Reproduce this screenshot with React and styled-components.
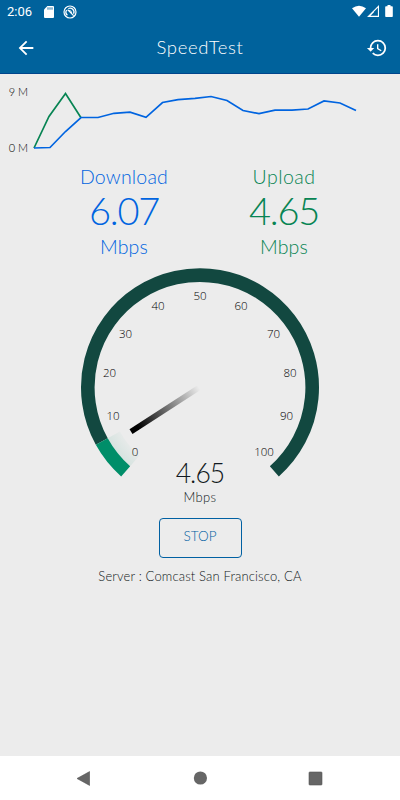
import styled, { createGlobalStyle } from 'styled-components';

const GlobalStyle = createGlobalStyle`
  body {
    margin: 0;
    background-color: #ececec;
    font-family: Lato, 'Liberation Sans', sans-serif;
    font-weight: 300;
  }
`;

const Screen = styled.div`
  width: 400px;
  height: 800px;
  display: flex;
  flex-direction: column;
  background-color: #ececec;
  overflow: hidden;
`;

const Top = styled.header`
  height: 74px;
  box-sizing: border-box;
  background-color: #00629c;
  border-bottom: 1px solid #00458c;
  color: #fff;
`;

const StatusBar = styled.div`
  height: 23px;
  display: flex;
  align-items: center;
  justify-content: space-between;
  padding: 0 6px 0 7px;
`;

const StatusGroup = styled.div`
  display: flex;
  align-items: center;
  gap: 9px;
  height: 23px;
`;

const Clock = styled.span`
  width: 28px;
  font: 400 13px/23px Roboto, sans-serif;
`;

const Toolbar = styled.div`
  height: 50px;
  display: grid;
  grid-template-columns: 52px 1fr 46px;
  align-items: center;
  justify-items: center;
`;

const Title = styled.h1`
  margin: 0 0 2px;
  padding-right: 6px;
  font-size: 18.5px;
  font-weight: 300;
  line-height: 24px;
  letter-spacing: 0.6px;
`;

const IconButton = styled.button`
  display: flex;
  padding: 0;
  border: 0;
  background: none;
  color: inherit;
`;

const Main = styled.main`
  flex: 1;
  display: flex;
  flex-direction: column;
  align-items: center;
`;

const ChartRow = styled.section`
  width: 400px;
  height: 88px;
  display: flex;
`;

const Axis = styled.div`
  width: 28px;
  height: 70px;
  padding-top: 11px;
  display: flex;
  flex-direction: column;
  justify-content: space-between;
  align-items: flex-end;
  font-size: 11px;
  line-height: 14px;
  color: #000;
`;

const Results = styled.section`
  width: 320px;
  height: 105px;
  display: grid;
  grid-template-columns: 1fr 1fr;
  padding-top: 2px;
  box-sizing: border-box;
`;

const Result = styled.div`
  display: flex;
  flex-direction: column;
  align-items: center;
  padding-left: 8px;
  color: ${(p) => p.$color};
`;

const Label = styled.span`
  font-size: 19.5px;
  line-height: 26px;
  letter-spacing: ${(p) => p.$spacing || 0}px;
`;

const Value = styled.strong`
  font-size: 38px;
  font-weight: 300;
  line-height: 40px;
  letter-spacing: -1.2px;
  margin-bottom: 2px;
`;

const Unit = styled.span`
  font-size: 19.5px;
  line-height: 29px;
  letter-spacing: 0.2px;
`;

const GaugeBox = styled.section`
  width: 240px;
  display: flex;
  flex-direction: column;
  align-items: center;
`;

const GaugeSvg = styled.svg`
  display: block;
  height: 211px;
  margin-bottom: -22px;
`;

const Tick = styled.text`
  font: 300 11.5px 'Open Sans', sans-serif;
  fill: #000;
  text-anchor: middle;
`;

const Speed = styled.div`
  font-size: 26.5px;
  line-height: 34px;
  color: #111820;
  letter-spacing: -0.9px;
`;

const SpeedUnit = styled.div`
  margin-top: -1px;
  font-size: 13px;
  line-height: 16px;
  color: #111820;
  letter-spacing: 0.3px;
`;

const StopButton = styled.button`
  width: 83px;
  height: 40px;
  margin-top: 13px;
  padding: 0 0 4px;
  border: 1px solid #0060a2;
  border-radius: 4px;
  background: none;
  color: #0060a2;
  font: 300 13.5px Lato, sans-serif;
`;

const Server = styled.p`
  margin: 10px 0 0;
  font-size: 13px;
  line-height: 17px;
  letter-spacing: 0.15px;
  color: #111820;
`;

const NavBar = styled.nav`
  height: 44px;
  background-color: #fff;
  display: grid;
  grid-template-columns: 1fr 14px 1fr;
  align-items: center;
  justify-items: start;
  padding: 0 77px 0 76px;

  svg:last-child {
    justify-self: end;
  }
`;

const download = [
  [34, 148], [50, 147.5], [65.5, 131.5], [81, 117.5], [98, 117.5], [114, 113.3],
  [130, 112.2], [146, 117.3], [162.5, 102.5], [178, 99.6], [195, 98.4], [211, 96.5],
  [227, 100.5], [243, 110.5], [259, 113.7], [275, 110.2], [292, 110.2], [308, 109],
  [324, 101], [340, 103], [356, 110.6],
];
const upload = [[34, 148], [49, 116.5], [65.5, 93.5], [81, 117.8]];

const ticks = [
  [0, 55, 189], [10, 33, 152.5], [20, 29.5, 110], [30, 45.5, 70.8], [40, 78, 43],
  [50, 120, 33], [60, 161, 43], [70, 193.5, 70.8], [80, 210, 110], [90, 206.5, 152.5],
  [100, 184, 189],
];

const toPoints = (data) => data.map((p) => p.join(',')).join(' ');

// angles are measured in degrees from straight down, clockwise
const arc = (r, from, to) => {
  const at = (deg) => {
    const a = (deg * Math.PI) / 180;
    return `${120 - r * Math.sin(a)} ${120.3 + r * Math.cos(a)}`;
  };
  return `M${at(from)}A${r} ${r} 0 ${to - from > 180 ? 1 : 0} 1 ${at(to)}`;
};

const Chart = () => (
  <ChartRow>
    <Axis>
      <span>9 M</span>
      <span>0 M</span>
    </Axis>
    <svg width="372" height="88" viewBox="28 74 372 88" fill="none" strokeWidth="1.7">
      <polyline points={toPoints(upload)} stroke="#078453" />
      <polyline points={toPoints(download)} stroke="#0064e0" />
    </svg>
  </ChartRow>
);

const Gauge = () => (
  <GaugeBox>
    <GaugeSvg width="240" height="211" viewBox="0 0 240 211" fill="none">
      <defs>
        <linearGradient id="needle" gradientUnits="userSpaceOnUse" x1="51" y1="164.6" x2="119" y2="120.6">
          <stop offset="0.1" stopColor="#000" />
          <stop offset="1" stopColor="#000" stopOpacity="0" />
        </linearGradient>
        <radialGradient id="glow" gradientUnits="userSpaceOnUse" cx="120" cy="120.3" r="105">
          <stop offset="0.86" stopColor="#00906a" stopOpacity="0.02" />
          <stop offset="1" stopColor="#00906a" stopOpacity="0.09" />
        </radialGradient>
      </defs>
      <path d={arc(98.5, 41.5, 61.1)} stroke="url(#glow)" strokeWidth="14" />
      <path d={arc(112.2, 61.1, 318.5)} stroke="#124840" strokeWidth="13.6" />
      <path d={arc(112.2, 41.5, 61.1)} stroke="#008e69" strokeWidth="13.6" />
      {ticks.map(([value, x, y]) => (
        <Tick key={value} x={x} y={y + 0.2}>{value}</Tick>
      ))}
      <path d="M51 164.6L119 120.6" stroke="url(#needle)" strokeWidth="5.5" />
    </GaugeSvg>
    <Speed>4.65</Speed>
    <SpeedUnit>Mbps</SpeedUnit>
  </GaugeBox>
);

const App = () => (
  <Screen>
    <GlobalStyle />
    <Top>
      <StatusBar>
        <StatusGroup>
          <Clock>2:06</Clock>
          <svg width="10" height="12" viewBox="0 0 10 12">
            <path d="M3.4 0H9q1 0 1 1v10q0 1-1 1H1q-1 0-1-1V3.4z" fill="#fff" />
            <path d="M4 1.3v2.4M6 1.3v2.4M8 1.3v2.4" stroke="#00629c" strokeWidth="0.9" />
          </svg>
          <svg width="14" height="14" viewBox="0 0 14 14" fill="none" stroke="#fff">
            <circle cx="7" cy="7" r="6" strokeWidth="1.2" />
            <path d="M4.4 10.2A4 4 0 0 1 3.6 5M5.3 3.5A4 4 0 0 1 10.6 8.8M4.6 4.6l6 6" strokeWidth="1.3" />
            <path d="M5.8 5.6q2.6-.6 2.8 2.6" strokeWidth="1" />
          </svg>
        </StatusGroup>
        <StatusGroup>
          <svg width="42" height="13" viewBox="0 0 42 13" fill="#fff">
            <path d="M0 3.2Q7 -1.8 14 3.2L7 11.7z" />
            <path d="M27 0v12H15zM25.9 2.8l-4 4v4h-3.4l3.4-3.6v3.6h4z" fillRule="evenodd" />
            <path d="M35.5 0h3v1.2H40q.8 0 .8.8v9.2q0 .8-.8.8h-6q-.8 0-.8-.8V2q0-.8.8-.8h1.5z" />
          </svg>
        </StatusGroup>
      </StatusBar>
      <Toolbar>
        <IconButton aria-label="Back">
          <svg width="22" height="22" viewBox="0 0 24 24" fill="currentColor">
            <path d="M20 11H7.83l5.59-5.59L12 4l-8 8 8 8 1.41-1.41L7.83 13H20v-2z" />
          </svg>
        </IconButton>
        <Title>SpeedTest</Title>
        <IconButton aria-label="History">
          <svg width="22" height="22" viewBox="0 0 24 24" fill="currentColor">
            <path d="M13 3a9 9 0 0 0-9 9H1l3.89 3.89.07.14L9 12H6c0-3.87 3.13-7 7-7s7 3.13 7 7-3.13 7-7 7c-1.93 0-3.68-.79-4.94-2.06l-1.42 1.42A8.954 8.954 0 0 0 13 21a9 9 0 0 0 0-18zm-1 5v5l4.28 2.54.72-1.21-3.5-2.08V8H12z" />
          </svg>
        </IconButton>
      </Toolbar>
    </Top>
    <Main>
      <Chart />
      <Results>
        <Result $color="#0064e0">
          <Label $spacing={0.2}>Download</Label>
          <Value>6.07</Value>
          <Unit>Mbps</Unit>
        </Result>
        <Result $color="#078453">
          <Label $spacing={0.5}>Upload</Label>
          <Value>4.65</Value>
          <Unit>Mbps</Unit>
        </Result>
      </Results>
      <Gauge />
      <StopButton>STOP</StopButton>
      <Server>Server : Comcast San Francisco, CA</Server>
    </Main>
    <NavBar>
      <svg width="14" height="15" viewBox="0 0 14 15">
        <path d="M1 7.5L13.6.6v13.8z" fill="#666" stroke="#555" strokeWidth="0.6" />
      </svg>
      <svg width="14" height="14" viewBox="0 0 14 14">
        <circle cx="7.4" cy="7" r="6.6" fill="#666" />
      </svg>
      <svg width="15" height="15" viewBox="0 0 15 15">
        <rect x="1" y="1" width="13" height="13" rx="0.8" fill="#666" stroke="#555" strokeWidth="0.6" />
      </svg>
    </NavBar>
  </Screen>
);

export default App;
